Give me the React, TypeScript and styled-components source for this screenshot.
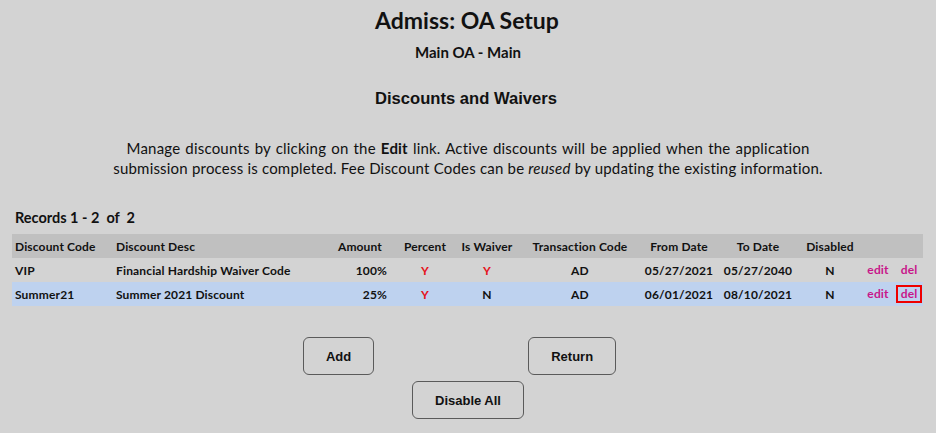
import React from "react";
import styled, { createGlobalStyle } from "styled-components";

const Global = createGlobalStyle`
  html, body { margin: 0; padding: 0; background: #d3d3d3; }
  body { font-family: Lato, "Noto Sans", sans-serif; color: #111; }
`;

const Page = styled.div`
  display: flex;
  flex-direction: column;
  width: 936px;
`;

const Title = styled.h1`
  margin: 7px 0 0;
  font-size: 23px;
  line-height: 26px;
  font-weight: 700;
  text-align: center;
  padding-right: 2px;
`;

const Subtitle = styled.h2`
  margin: 11px 0 0;
  font-size: 15px;
  line-height: 17px;
  font-weight: 700;
  text-align: center;
`;

const Section = styled.h3`
  margin: 29px 0 0;
  font-family: "Liberation Sans", Arial, sans-serif;
  font-size: 16.6px;
  line-height: 18px;
  font-weight: 700;
  text-align: center;
  padding-right: 4px;
`;

const Intro = styled.p`
  margin: 30px auto 0;
  width: 800px;
  font-size: 15px;
  line-height: 20px;
  letter-spacing: 0.2px;
  text-align: center;
`;

const FirstLine = styled.span`
  word-spacing: 1px;
`;

const Records = styled.div`
  margin: 32px 0 0 15px;
  font-size: 14.5px;
  line-height: 16px;
  font-weight: 700;
`;

const Table = styled.table`
  margin: 8px 0 0 12px;
  width: 911px;
  border-collapse: collapse;
  table-layout: fixed;
  font-size: 12px;
  font-weight: 700;
  letter-spacing: 0.15px;
`;

const HeadRow = styled.tr`
  background: #c0c0c0;
  height: 24px;
`;

const Row = styled.tr<{ $active?: boolean }>`
  height: 24px;
  background: ${(p) => (p.$active ? "#bed2ef" : "transparent")};
`;

type Align = "left" | "right" | "center";

const Th = styled.th<{ $align?: Align }>`
  padding: 0 ${(p) => (p.$align === "right" ? "13px" : "3px")} 0 3px;
  text-align: ${(p) => p.$align ?? "center"};
  font-weight: 700;
  white-space: nowrap;
`;

const Td = styled.td<{ $align?: Align; $red?: boolean }>`
  padding: 0 ${(p) => (p.$align === "right" ? "8px" : "3px")} 0 3px;
  text-align: ${(p) => p.$align ?? "center"};
  color: ${(p) => (p.$red ? "#e5141c" : "#111")};
  white-space: nowrap;
`;

const ActionCell = styled.td`
  padding: 0;
  text-align: center;
  white-space: nowrap;
`;

const Link = styled.a<{ $focused?: boolean }>`
  color: #c8168a;
  text-decoration: none;
  display: inline-block;
  line-height: 14px;
  padding: 0 3px;
  border: 2px solid ${(p) => (p.$focused ? "#ee0000" : "transparent")};
  cursor: pointer;
`;

const ButtonRow = styled.div`
  display: flex;
  justify-content: center;
  gap: 154px;
  margin-top: 31px;
  padding-right: 17px;
`;

const ButtonRow2 = styled.div`
  display: flex;
  justify-content: center;
  margin-top: 6px;
`;

const Button = styled.button`
  height: 38px;
  padding: 0 22px;
  border: 1px solid #5a5a5a;
  border-radius: 6px;
  background: transparent;
  font-family: "Liberation Sans", Arial, sans-serif;
  font-size: 13px;
  font-weight: 700;
  color: #111;
  cursor: pointer;
`;

const cols = [101, 217, 65, 60, 64, 122, 76, 82, 62, 34, 28];

const rows = [
  { code: "VIP", desc: "Financial Hardship Waiver Code", amount: "100%", percent: "Y", waiver: "Y", tc: "AD", from: "05/27/2021", to: "05/27/2040", disabled: "N" },
  { code: "Summer21", desc: "Summer 2021 Discount", amount: "25%", percent: "Y", waiver: "N", tc: "AD", from: "06/01/2021", to: "08/10/2021", disabled: "N" },
];

export default function App() {
  return (
    <Page>
      <Global />
      <Title>Admiss: OA Setup</Title>
      <Subtitle>Main OA - Main</Subtitle>
      <Section>Discounts and Waivers</Section>
      <Intro>
        <FirstLine>
          Manage discounts by clicking on the <b>Edit</b> link. Active discounts will be applied when the application
        </FirstLine>
        <br />
        submission process is completed. Fee Discount Codes can be <i>reused</i> by updating the existing information.
      </Intro>
      <Records>Records 1 - 2&nbsp; of&nbsp; 2</Records>
      <Table>
        <colgroup>
          {cols.map((w, i) => (
            <col key={i} style={{ width: w }} />
          ))}
        </colgroup>
        <thead>
          <HeadRow>
            <Th $align="left">Discount Code</Th>
            <Th $align="left">Discount Desc</Th>
            <Th $align="right">Amount</Th>
            <Th>Percent</Th>
            <Th>Is Waiver</Th>
            <Th>Transaction Code</Th>
            <Th>From Date</Th>
            <Th>To Date</Th>
            <Th>Disabled</Th>
            <Th></Th>
            <Th></Th>
          </HeadRow>
        </thead>
        <tbody>
          {rows.map((r, i) => (
            <Row key={r.code} $active={i === 1}>
              <Td $align="left">{r.code}</Td>
              <Td $align="left">{r.desc}</Td>
              <Td $align="right">{r.amount}</Td>
              <Td $red={r.percent === "Y"}>{r.percent}</Td>
              <Td $red={r.waiver === "Y"}>{r.waiver}</Td>
              <Td>{r.tc}</Td>
              <Td>{r.from}</Td>
              <Td>{r.to}</Td>
              <Td>{r.disabled}</Td>
              <ActionCell>
                <Link>edit</Link>
              </ActionCell>
              <ActionCell>
                <Link $focused={i === 1}>del</Link>
              </ActionCell>
            </Row>
          ))}
        </tbody>
      </Table>
      <ButtonRow>
        <Button>Add</Button>
        <Button>Return</Button>
      </ButtonRow>
      <ButtonRow2>
        <Button>Disable All</Button>
      </ButtonRow2>
    </Page>
  );
}
